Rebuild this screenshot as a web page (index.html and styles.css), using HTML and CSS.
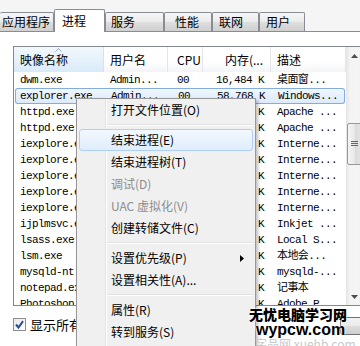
FILE: index.html
```html
<!DOCTYPE html>
<html lang="zh-CN">
<head>
	<meta charset="utf-8">
	<title>Windows 任务管理器 - 进程</title>
	<link rel="stylesheet" href="styles.css">
</head>
<body>
<div id="taskmgr">
	<ul class="tabs">
		<li class="tab">应用程序</li>
		<li class="tab selected">进程</li>
		<li class="tab">服务</li>
		<li class="tab">性能</li>
		<li class="tab">联网</li>
		<li class="tab">用户</li>
	</ul>

	<div class="page">
		<div class="list">
			<div class="list-main">
				<div class="row list-head">
					<span class="cell name sorted">
						<svg class="sort-arrow" width="7" height="4" viewBox="0 0 7 4"><path d="M0.5 3.5 L3.5 0.5 L6.5 3.5" fill="none" stroke="#97a5b8" stroke-width="1"/></svg>
						映像名称
					</span>
					<span class="cell user">用户名</span>
					<span class="cell cpu">CPU</span>
					<span class="cell mem">内存(...</span>
					<span class="cell desc">描述</span>
				</div>
				<div class="rows">
					<div class="row"><span class="cell name">dwm.exe</span><span class="cell user">Admin...</span><span class="cell cpu">00</span><span class="cell mem">16,484 K</span><span class="cell desc">桌面窗...</span></div>
					<div class="row selected"><span class="cell name">explorer.exe</span><span class="cell user">Admin...</span><span class="cell cpu">00</span><span class="cell mem">58,768 K</span><span class="cell desc">Windows...</span></div>
					<div class="row"><span class="cell name">httpd.exe</span><span class="cell user">SYSTEM</span><span class="cell cpu">00</span><span class="cell mem">9,120 K</span><span class="cell desc">Apache ...</span></div>
					<div class="row"><span class="cell name">httpd.exe</span><span class="cell user">SYSTEM</span><span class="cell cpu">00</span><span class="cell mem">12,904 K</span><span class="cell desc">Apache ...</span></div>
					<div class="row"><span class="cell name">iexplore.exe</span><span class="cell user">Admin...</span><span class="cell cpu">00</span><span class="cell mem">24,356 K</span><span class="cell desc">Interne...</span></div>
					<div class="row"><span class="cell name">iexplore.exe</span><span class="cell user">Admin...</span><span class="cell cpu">00</span><span class="cell mem">31,772 K</span><span class="cell desc">Interne...</span></div>
					<div class="row"><span class="cell name">iexplore.exe</span><span class="cell user">Admin...</span><span class="cell cpu">00</span><span class="cell mem">18,240 K</span><span class="cell desc">Interne...</span></div>
					<div class="row"><span class="cell name">iexplore.exe</span><span class="cell user">Admin...</span><span class="cell cpu">00</span><span class="cell mem">46,508 K</span><span class="cell desc">Interne...</span></div>
					<div class="row"><span class="cell name">iexplore.exe</span><span class="cell user">Admin...</span><span class="cell cpu">00</span><span class="cell mem">22,016 K</span><span class="cell desc">Interne...</span></div>
					<div class="row"><span class="cell name">ijplmsvc.exe</span><span class="cell user">SYSTEM</span><span class="cell cpu">00</span><span class="cell mem">1,236 K</span><span class="cell desc">Inkjet ...</span></div>
					<div class="row"><span class="cell name">lsass.exe</span><span class="cell user">SYSTEM</span><span class="cell cpu">00</span><span class="cell mem">3,540 K</span><span class="cell desc">Local S...</span></div>
					<div class="row"><span class="cell name">lsm.exe</span><span class="cell user">SYSTEM</span><span class="cell cpu">00</span><span class="cell mem">1,372 K</span><span class="cell desc">本地会...</span></div>
					<div class="row"><span class="cell name">mysqld-nt.exe</span><span class="cell user">SYSTEM</span><span class="cell cpu">00</span><span class="cell mem">10,848 K</span><span class="cell desc">mysqld-...</span></div>
					<div class="row"><span class="cell name">notepad.exe</span><span class="cell user">Admin...</span><span class="cell cpu">00</span><span class="cell mem">1,892 K</span><span class="cell desc">记事本</span></div>
					<div class="row"><span class="cell name">Photoshop.exe</span><span class="cell user">Admin...</span><span class="cell cpu">00</span><span class="cell mem">96,412 K</span><span class="cell desc">Adobe P...</span></div>
				</div>
			</div>
			<div class="scrollbar">
				<div class="sb-btn">
					<svg width="7" height="4" viewBox="0 0 7 4"><path d="M0 4 L3.5 0 L7 4 Z" fill="#4d4d4d"/></svg>
				</div>
				<div class="sb-track">
					<div class="sb-thumb">
						<svg width="7" height="6" viewBox="0 0 7 6"><path d="M0 0.5 H7 M0 2.5 H7 M0 4.5 H7" stroke="#666" stroke-width="1"/></svg>
					</div>
				</div>
				<div class="sb-btn">
					<svg width="7" height="4" viewBox="0 0 7 4"><path d="M0 0 L3.5 4 L7 0 Z" fill="#4d4d4d"/></svg>
				</div>
			</div>
		</div>

		<div class="footer">
			<label class="show-all">
				<span class="checkbox">
					<svg width="9" height="9" viewBox="0 0 9 9"><path d="M1 4.5 L3.5 7.5 L8 1.2" fill="none" stroke="#2b4c94" stroke-width="2"/></svg>
				</span>
				显示所有用户的进程(S)
			</label>
			<button class="end-btn">结束进程(E)</button>
		</div>
	</div>

	<ul class="menu">
		<li class="item">打开文件位置(O)</li>
		<li class="sep"></li>
		<li class="item hover">结束进程(E)</li>
		<li class="item">结束进程树(T)</li>
		<li class="item disabled">调试(D)</li>
		<li class="item disabled">UAC 虚拟化(V)</li>
		<li class="item">创建转储文件(C)</li>
		<li class="sep"></li>
		<li class="item">设置优先级(P)<svg class="sub-arrow" width="4" height="7" viewBox="0 0 4 7"><path d="M0 0 L4 3.5 L0 7 Z" fill="#000"/></svg></li>
		<li class="item">设置相关性(A)...</li>
		<li class="sep"></li>
		<li class="item">属性(R)</li>
		<li class="item">转到服务(S)</li>
	</ul>

	<div class="watermark">
		<p class="wm-title">无忧电脑学习网</p>
		<p class="wm-url">wypcw.com</p>
		<p class="wm-faint">字品网 xuehb.com</p>
	</div>
</div>
</body>
</html>
```

FILE: styles.css
```css
html, body {
	margin: 0;
}
body {
	width: 360px;
	height: 346px;
	overflow: hidden;
	background: #fff;
	font-family: "Noto Sans CJK SC", sans-serif;
	font-size: 12px;
	color: #000;
}
#taskmgr {
	position: relative;
	width: 360px;
	height: 346px;
	overflow: hidden;
}

/* tabs */
.tabs {
	display: flex;
	align-items: flex-end;
	height: 31px;
	margin: 0;
	padding: 0;
	list-style: none;
	border-bottom: 1px solid #898c95;
	background: #f5f5f5;
}
.tab {
	box-sizing: border-box;
	height: 19px;
	line-height: 17px;
	padding-left: 6px;
	border: 1px solid #898c95;
	border-bottom: none;
	border-radius: 2px 2px 0 0;
	background: linear-gradient(#f6f6f6, #ebebeb 50%, #dedede 51%, #d0d0d0);
	white-space: nowrap;
}
.tab:nth-child(1) { width: 54px; padding-left: 2px; border-left: none; }
.tab:nth-child(2) { width: 51px; }
.tab:nth-child(3) { width: 59px; padding-left: 5px; }
.tab:nth-child(4) { width: 48px; padding-left: 10px; }
.tab:nth-child(5) { width: 47px; }
.tab:nth-child(6) { width: 46px; }
.tab.selected {
	height: 23px;
	line-height: 21px;
	margin-bottom: -1px;
	padding-left: 7px;
	background: #fff;
}

/* page */
.page {
	width: 414px;
	padding: 14px 0 0 13px;
}
.list {
	display: grid;
	grid-template-columns: 332px 17px;
	height: 258px;
	border: 1px solid #828790;
	overflow: hidden;
}
.list-main {
	overflow: hidden;
}
.row {
	display: grid;
	grid-template-columns: 90px 64px 35px 68px 75px;
	height: 16px;
	line-height: 16px;
	white-space: nowrap;
}
.rows .row {
	font-family: "Liberation Mono", "Noto Sans CJK SC", monospace;
	font-size: 11px;
	letter-spacing: -0.6px;
}
.cell {
	overflow: hidden;
	padding-left: 6px;
}
.cell.cpu {
	padding-left: 9px;
}
.cell.mem {
	padding-left: 0;
	padding-right: 7px;
	text-align: right;
}
.list-head {
	height: 25px;
	line-height: 25px;
	background: linear-gradient(#fff, #fff 60%, #f3f4f6);
}
.list-head .cell {
	position: relative;
	border-right: 1px solid #e3e5e8;
}
.list-head .cell.sorted {
	background: linear-gradient(#f2f8fd, #e3f0fb 60%, #d9eaf8);
	border-right-color: #d5e1ec;
}
.sort-arrow {
	position: absolute;
	left: 41px;
	top: 1px;
}
.row.selected {
	border-radius: 3px;
	background: linear-gradient(#f1f7fe, #dbeafc);
	box-shadow: inset 0 0 0 1px #84acdd;
	margin: 0 1px;
}
.row.selected .name {
	padding-left: 5px;
}

/* scrollbar */
.scrollbar {
	display: flex;
	flex-direction: column;
	background: linear-gradient(to right, #e5e5e5, #f4f4f4 25%, #f4f4f4 75%, #e9e9e9);
}
.sb-btn {
	height: 17px;
	display: flex;
	align-items: center;
	justify-content: center;
}
.sb-track {
	flex: 1;
	padding-top: 59px;
}
.sb-thumb {
	box-sizing: border-box;
	height: 42px;
	margin: 0 1px;
	border: 1px solid #999;
	border-radius: 2px;
	background: linear-gradient(to right, #f4f4f4, #e8e8e8 50%, #dadada 51%, #e3e3e3);
	display: flex;
	align-items: center;
	justify-content: center;
}

/* footer */
.footer {
	display: flex;
	align-items: center;
	margin-top: 7px;
}
.show-all {
	display: flex;
	align-items: center;
	gap: 4px;
	font-size: 13px;
}
.checkbox {
	box-sizing: border-box;
	width: 13px;
	height: 13px;
	border: 1px solid #8e8f8f;
	background: linear-gradient(135deg, #e9e9e9, #fff);
	display: flex;
	align-items: center;
	justify-content: center;
}
.end-btn {
	margin-left: auto;
	width: 87px;
	height: 18px;
	margin-top: 4px;
	padding-left: 26px;
	text-align: left;
	border: 1px solid #707070;
	border-radius: 3px;
	background: linear-gradient(#f2f2f2, #ebebeb 50%, #dddddd 51%, #cfcfcf);
	font: 12px "Noto Sans CJK SC", sans-serif;
	white-space: nowrap;
}

/* context menu */
.menu {
	position: absolute;
	left: 76px;
	top: 98px;
	width: 180px;
	height: 260px;
	box-sizing: border-box;
	margin: 0;
	padding: 0 2px;
	list-style: none;
	border: 1px solid #979797;
	background: linear-gradient(to right, transparent 28px, #e2e3e3 28px, #e2e3e3 29px, #fff 29px, #fff 30px, transparent 30px), #f0f0f0;
	box-shadow: 2px 2px 3px rgba(0, 0, 0, .25);
	font-size: 12px;
}
.item {
	box-sizing: border-box;
	height: 22px;
	line-height: 20px;
	padding: 0 8px 0 31px;
	border: 1px solid transparent;
	border-radius: 3px;
	display: flex;
	align-items: center;
	justify-content: space-between;
}
.item.hover {
	border-color: #aecff7;
	background: linear-gradient(#f2f8fe, #e0edfc);
}
.item.disabled {
	color: #8d8d8d;
}
.sep {
	height: 8px;
	margin-left: 29px;
	background: linear-gradient(transparent 3px, #e0e0e0 3px, #e0e0e0 4px, #fff 4px, #fff 5px, transparent 5px);
}

/* watermark */
.watermark {
	position: absolute;
	left: 249px;
	top: 306px;
}
.watermark p {
	margin: 0;
	white-space: nowrap;
}
.wm-title {
	font-size: 14px;
	font-weight: 900;
	line-height: 17px;
	text-shadow: 0 0 2px #fff, 0 0 2px #fff;
}
.wm-url {
	margin-left: 7px !important;
	font-family: "Liberation Sans", sans-serif;
	font-size: 16px;
	font-weight: bold;
	line-height: 14px;
	text-shadow: 0 0 2px #fff, 0 0 2px #fff;
}
.wm-faint {
	margin-left: 6px !important;
	color: #c9c9c9;
	font-size: 12px;
	line-height: 14px;
}
```
